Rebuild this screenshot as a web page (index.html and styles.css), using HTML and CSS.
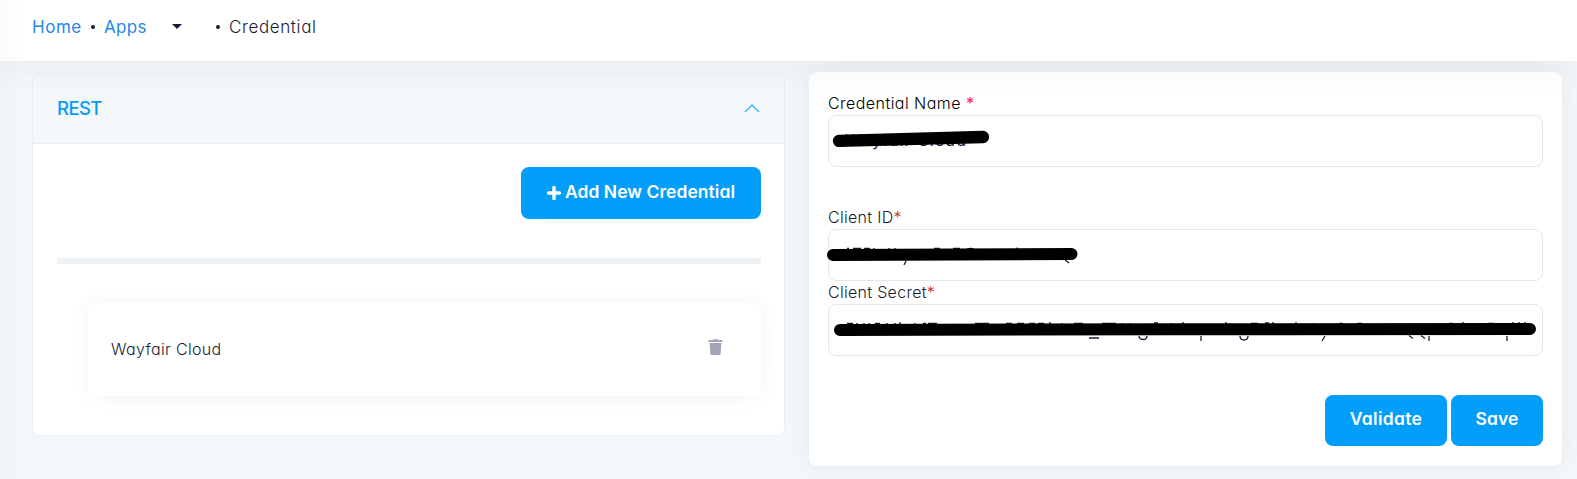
FILE: index.html
```html
<!DOCTYPE html>
<html lang="en">
<head>
<meta charset="utf-8">
<title>Credential</title>
<link rel="stylesheet" href="styles.css">
</head>
<body>
<header class="topbar">
  <nav class="crumbs">
    <a class="crumb-home" href="#">Home</a><i class="dot"></i><a class="crumb-apps" href="#">Apps</a><i class="caret"></i><i class="dot"></i><span class="crumb-current">Credential</span>
  </nav>
</header>
<main class="content">
  <section class="accordion">
    <div class="accordion-head">
      <span class="accordion-title">REST</span>
      <svg class="chevron" width="16" height="9" viewBox="0 0 16 9"><path d="M1 8.2 8 1.2l7 7" fill="none" stroke="#18a5f8" stroke-width="1.2"/></svg>
    </div>
    <div class="accordion-body">
      <button class="btn btn-add"><svg width="14" height="14" viewBox="0 0 14 14"><path d="M7 1.6v10.800M1.600 7h10.800" stroke="#fff" stroke-width="3.5" stroke-linecap="round"/></svg><span class="btn-add-label">Add New Credential</span></button>
      <div class="divider"></div>
      <div class="item">
        <span class="item-name">Wayfair Cloud</span>
        <svg width="15" height="16" viewBox="0 0 15 16"><path fill="#a1a5b7" d="M.5 1h4.200l.6-.8h4.400l.6.8h4.200v2H.5zM1.600 4h11.800l-.9 12h-10z"/></svg>
      </div>
    </div>
  </section>
  <section class="form">
    <label class="label label-name">Credential Name <b class="req-name">*</b></label>
    <div class="field">
      <span class="value">Wayfair Cloud</span>
      <svg class="mask" width="714" height="50"><path d="M10 24.900 154 21" stroke="#000" stroke-width="12.400" stroke-linecap="round"/></svg>
    </div>
    <label class="label label-id">Client ID<b class="req">*</b></label>
    <div class="field">
      <svg class="mask" width="714" height="50"><g fill="none" stroke="#181c32" stroke-width="1.300"><path d="M18 18.500h2M24 18.500h8M35 18.500h6M45 18v2M60 18v2M66 18v2M77 31l-2 4M105 18.500h6M124 18.500h7M138 18.800q4-1 7 0M188 17.500v3M236 30l4 3"/></g><path d="M4 25 242.500 24" stroke="#000" stroke-width="12" stroke-linecap="round"/></svg>
    </div>
    <label class="label label-secret">Client Secret<b class="req">*</b></label>
    <div class="field">
      <svg class="mask" width="714" height="50"><g fill="none" stroke="#181c32" stroke-width="1.300"><path d="M18 18.500h6M28 18v2M35 18v2M40 18v2M46 18.500h5M58 18v2M66 18v2M71 17v3M86 18v2M94 18.500h3M99 18.500h9M146 18.500h14M177 18.500h6M188 18.500h7M200 18.500h6M209 18.500h6M221 17v3M233 18v2M245 18.500h9M273 18.500h14M293 18v2M301 18v2M260 33h10M310 31q0 3 4 3.500 4 0 4-3.500M325 18h4M342 18v2M354 17v3M372 31v5M411 31q0 4 4 4 4 0 4-4M397 17v3M422 18.500h7M436 18h4M444 17v3M467 17v3M485 18v2M496 31l-3 5M510 18.500h4M528 18.500h5M580 30.500l4 3M592 30.500l4 3M600 31v5M620 18.500h4M634 17v3M659 18.500h6M678 31v5M684 17v3M690 17v3M696 17v3"/></g><path d="M11 24.900 350 24.200 701 24" stroke="#000" stroke-width="12" stroke-linecap="round"/></svg>
    </div>
    <div class="actions">
      <button class="btn btn-validate">Validate</button>
      <button class="btn btn-save">Save</button>
    </div>
  </section>
</main>
</body>
</html>
```
FILE: styles.css
```css
* { box-sizing: border-box; }
body {
  margin: 0;
  height: 479px;
  overflow: hidden;
  display: flex;
  flex-direction: column;
  background: #f4f8fb;
  color: #181c32;
  font-family: Inter, "Open Sans", sans-serif;
  font-feature-settings: "cv11";
  font-size: 16px;
}
/* soft shadow from the navigation edge */
body::before {
  content: "";
  position: absolute;
  inset: 0 auto 0 0;
  width: 24px;
  background: linear-gradient(90deg, rgba(60, 50, 70, .025), transparent);
  z-index: 3;
}
.topbar {
  flex: none;
  height: 61px;
  padding-left: 32px;
  background: #fff;
  box-shadow: 0 10px 30px rgba(70, 60, 80, .055);
  position: relative;
  z-index: 2;
}
.crumbs { display: flex; align-items: center; height: 54px; font-size: 17px; font-weight: 300; }
.crumbs a { color: #2587e8; text-decoration: none; font-weight: 400; }
.crumb-home { width: 59px; letter-spacing: .55px; }
.crumb-apps { width: 68px; margin-left: 9px; letter-spacing: .3px; }
.crumb-current { margin-left: 9px; letter-spacing: .62px; }
.dot { width: 4px; height: 4px; border-radius: 50%; background: #181c32; }
.caret { width: 10px; margin: -2px 34px 0 0; border: 5px solid transparent; border-top-color: #181c32; border-bottom: 0; }
.content { display: flex; align-items: flex-start; gap: 24px; padding: 11px 15px 0 32px; }
.accordion {
  width: 753px;
  height: 363px;
  margin-top: 1px;
  border: 1px solid #eaeff3;
  border-radius: 8px;
  background: #fff;
  overflow: hidden;
}
.accordion-head {
  display: flex;
  justify-content: space-between;
  align-items: center;
  height: 70px;
  padding: 0 24px;
  background: #f4f8fb;
  border-bottom: 1px solid #eaeff3;
}
.accordion-title { margin-top: -2px; color: #049dfb; font-size: 18.500px; font-weight: 500; letter-spacing: -.6px; }
.accordion-body { display: flex; flex-direction: column; padding: 23px 23px 0 24px; }
.btn {
  display: flex;
  align-items: center;
  justify-content: center;
  padding: 0 0 3px;
  border: 0;
  border-radius: 8px;
  background: #039ef9;
  color: #fff;
  font: 600 17.500px Inter, "Open Sans", sans-serif;
  font-feature-settings: "cv11";
  letter-spacing: .05px;
  white-space: nowrap;
}
.btn-add { align-self: flex-end; width: 240px; height: 52px; gap: 4px; }
.btn-add svg { margin-top: 3px; }
.divider { height: 6px; margin-top: 39px; background: #eef2f5; }
.item {
  display: flex;
  align-items: center;
  justify-content: space-between;
  height: 93px;
  margin: 39px 0 0 31px;
  padding: 0 38px 0 23px;
  border-radius: 8px;
  box-shadow: 0 0 20px rgba(0, 0, 0, .055);
}
.item-name { margin-top: -1px; font-size: 16px; font-weight: 300; letter-spacing: .35px; }
.item svg { margin-top: -5px; }
.form {
  display: flex;
  flex-direction: column;
  width: 753px;
  height: 394px;
  padding: 20px 19px 0;
  border-radius: 8px;
  background: #fff;
  box-shadow: 0 0 30px rgba(24, 28, 50, .065);
}
.label { height: 23px; line-height: 23px; font-weight: 300; letter-spacing: .3px; }
.label-name { color: #000; letter-spacing: .45px; }
.label-id { margin-top: 39px; }
.label b { font-weight: 400; }
.label .req-name { color: #f1416c; font-weight: 600; }
.label .req { color: #c22; font-weight: 300; }
.field { position: relative; height: 52px; border: 1px solid #e4e6ef; border-radius: 8px; }
.value { position: absolute; left: 16px; top: 14px; font-size: 16.500px; letter-spacing: .8px; }
.mask { position: absolute; left: 0; top: 0; overflow: visible; }
.actions { display: flex; justify-content: flex-end; gap: 4px; margin-top: 39px; }
.btn-validate { width: 122px; height: 51px; padding-bottom: 4px; letter-spacing: .3px; }
.btn-save { width: 92px; height: 51px; padding-bottom: 4px; }
```
